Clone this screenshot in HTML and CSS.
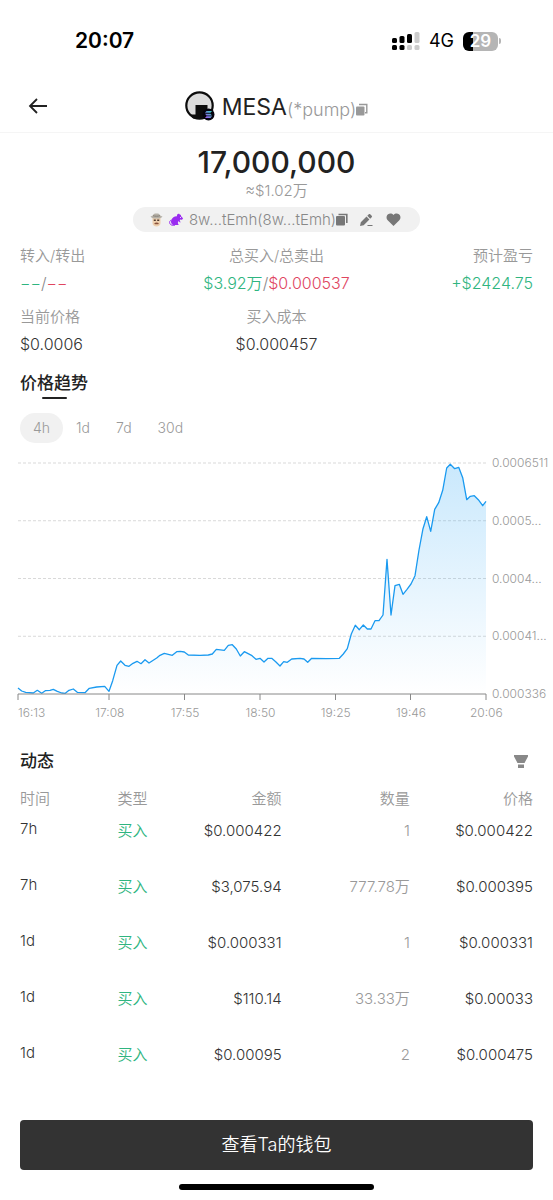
FILE: index.html
```html
<!DOCTYPE html>
<html lang="zh-CN">
<head>
<meta charset="utf-8">
<meta name="viewport" content="width=device-width, initial-scale=1">
<title>MESA</title>
<link rel="stylesheet" href="styles.css">
</head>
<body>
<div class="page">
  <div class="status">
    <span class="status-time">20:07</span>
    <div class="status-right">
      <svg class="signal" viewBox="0 0 28 20" aria-hidden="true">
        <g fill="#000"><rect x="0" y="7" width="5" height="5" rx="1.5"/><rect x="7.500" y="5" width="5" height="7" rx="1.500"/><rect x="15" y="3" width="5" height="9" rx="1.500"/><rect x="0" y="14" width="5" height="5" rx="1.500"/><rect x="7.500" y="14" width="5" height="5" rx="1.500"/></g>
        <g fill="#ccc"><rect x="22.500" y="1" width="5" height="11" rx="1.500"/><rect x="15" y="14" width="5" height="5" rx="1.500"/><rect x="22.500" y="14" width="5" height="5" rx="1.500"/></g>
      </svg>
      <span class="network">4G</span>
      <span class="battery"><span class="battery-level">29</span><span class="battery-tip"></span></span>
    </div>
  </div>

  <header class="nav">
    <button class="icon-btn back" type="button" aria-label="返回">
      <svg width="20" height="18" viewBox="0 0 20 18" fill="none" stroke="#222" stroke-width="1.800"><path d="M19 9H2M9 2 2 9l7 7"/></svg>
    </button>
    <h1 class="token">
      <svg class="avatar" width="30" height="30" viewBox="0 0 30 30" aria-hidden="true">
        <defs><linearGradient id="sol" x1="0" y1="1" x2="1" y2="0"><stop offset="0" stop-color="#a64cf5"/><stop offset="1" stop-color="#2fd6c0"/></linearGradient></defs>
        <circle cx="14.500" cy="14.500" r="13.200" fill="#dcdcdc" stroke="#0c0c0c" stroke-width="2.200"/>
        <path d="M10.500 14h12v13.500H8l-3-4h5.500z" fill="#0c0c0c"/>
        <circle cx="23.500" cy="23.500" r="6" fill="#05030d"/>
        <path d="M21.500 20h5.500l-1.500 1.700H20zM20 22.700h5.500l1.500 1.700h-5.500zM21.500 25.300h5.500L25.500 27H20z" fill="url(#sol)"/>
      </svg>
      <span class="token-name">MESA</span><span class="token-sub">(*pump)</span>
      <button class="icon-btn" type="button" aria-label="复制合约">
        <svg width="12" height="13" viewBox="0 0 12 13"><rect x="0" y="3.500" width="8.500" height="9" rx="1" fill="#999"/><path d="M3 1.500h7.800v8.200H9" fill="none" stroke="#999" stroke-width="1.400"/></svg>
      </button>
    </h1>
  </header>

  <main>
    <section class="balance">
      <p class="amount">17,000,000</p>
      <p class="approx">≈$1.02万</p>
      <div class="wallet">
        <svg class="farmer" width="13" height="14" viewBox="0 0 13 14" aria-hidden="true">
          <path d="M2.500 5h8v5c0 2-1.800 3.500-4 3.500s-4-1.500-4-3.500z" fill="#edcfae"/>
          <path d="M.5 3.500C1.500 3 3 2.800 3.200 2c.4-1.300 1.400-1.600 3.300-1.600s2.900.3 3.300 1.600c.2.800 1.700 1 2.700 1.500-1 1.600-3.300 2.100-6 2.100s-5-.5-6-2.100z" fill="#b5b1a8"/>
          <path d="M3 2.700c2 .7 5 .7 7 0" stroke="#857e74" fill="none"/>
          <path d="M3.800 6.500h2v1.600h-2zM7.200 6.500h2v1.600h-2z" fill="#4e3a30"/>
          <path d="M4.300 10.300c1.300-1 3.200-1 4.500 0l-.5 1H4.800z" fill="#89513b"/>
        </svg>
        <svg class="rat" width="14" height="13" viewBox="0 0 14 13" aria-hidden="true">
          <path d="M8 3.200c-.3-1.300.5-2.500 1.600-2.500.8 0 1.200.5 1.300 1.100.9-.2 1.300.4 1 1.200L14 5.200c-.3 1.300-1.500 1.600-2.800 1.400l-.5 1.500 1.200 1.200h-1.300L9.400 8l-.6 2 .9 2H4.200C2 11 1.600 9 2.300 7.300 3.300 4.500 5.500 3 8 3.200z" fill="#9a2cf0"/>
          <path d="M2.500 7C0 7.500-.2 11.500 3 12.200h3" fill="none" stroke="#9a2cf0"/>
          <circle cx="11.500" cy="4.500" r=".5" fill="#fff"/>
        </svg>
        <span class="wallet-name">8w...tEmh(8w...tEmh)</span>
        <button class="icon-btn" type="button" aria-label="复制地址">
          <svg width="12" height="13" viewBox="0 0 12 13"><rect x="0" y="3" width="9" height="9.500" rx="1" fill="#777"/><path d="M2.500 1.500h8.300v8.500" fill="none" stroke="#777" stroke-width="1.600"/></svg>
        </button>
        <button class="icon-btn edit" type="button" aria-label="编辑">
          <svg width="14" height="14" viewBox="0 0 14 14" fill="#777"><path d="M1 13l.8-3.700L7.500 3.600l2.900 2.900-5.700 5.700zM8.300 2.800 9.800 1.300c.5-.5 1-.5 1.400 0l1.500 1.500c.5.500.5.900 0 1.400l-1.500 1.500zM8.500 12h5v1h-5z"/></svg>
        </button>
        <button class="icon-btn heart" type="button" aria-label="收藏">
          <svg width="15" height="13" viewBox="0 0 16 14"><path d="M8 14 2 8.200C.5 6.700.3 5 .7 3.500 1.500.5 5.600-.5 8 2.200c2.400-2.700 6.500-1.700 7.300 1.300.4 1.500.2 3.200-1.300 4.700z" fill="#777"/></svg>
        </button>
      </div>
    </section>

    <dl class="stats">
      <div><dt>转入/转出</dt><dd><span class="up">−−</span><span class="slash">/</span><span class="down">−−</span></dd></div>
      <div><dt>总买入/总卖出</dt><dd><span class="up">$3.92万</span><span class="slash">/</span><span class="down">$0.000537</span></dd></div>
      <div><dt>预计盈亏</dt><dd class="up">+$2424.75</dd></div>
      <div><dt>当前价格</dt><dd>$0.0006</dd></div>
      <div><dt>买入成本</dt><dd>$0.000457</dd></div>
    </dl>

    <section class="trend">
      <h2 class="underlined">价格趋势</h2>
      <div class="tabs">
        <button class="tab active" type="button" aria-pressed="true">4h</button>
        <button class="tab" type="button" aria-pressed="false">1d</button>
        <button class="tab" type="button" aria-pressed="false">7d</button>
        <button class="tab" type="button" aria-pressed="false">30d</button>
      </div>
      <div class="chart">
        <svg class="plot" viewBox="0 0 468 231" preserveAspectRatio="none" role="img" aria-label="价格趋势">
          <defs><linearGradient id="fill" x1="0" y1="0" x2="0" y2="1"><stop offset="0" stop-color="#2aa5f5" stop-opacity=".25"/><stop offset="1" stop-color="#2aa5f5" stop-opacity="0"/></linearGradient></defs>
          <path class="gridline" d="M0 0H468M0 57.750H468M0 115.500H468M0 173.250H468"/>
          <path fill="url(#fill)" d="M0 231 0 225 3.700 228 7.700 229.300 15.300 230 19.300 227.300 23.700 230.300 27.300 227.700 32 227.300 35.300 226.300 39.300 228.300 43.700 230 47.300 230.300 51 227.300 55.300 226 59.300 229.300 67 229.700 71.300 225.300 78.700 224 86.700 223.300 91 228.300 94.700 217.700 99 202.300 102.700 198 107 202.300 111 203.300 115 200.300 119 198.300 123 200.700 127 196.700 131 200 138.700 195 142 192.300 146.300 190.300 154.300 192.300 158.700 188.700 162.300 188.300 166.300 189 170.300 192 182 192.300 190.300 192 194.300 191 198.300 186.300 206.300 187.300 210.300 182.300 214.300 181.700 218.300 186 222.300 193 226.300 188.700 234 192.700 238 196.300 242 195.300 246 199 250 195.300 253.700 195.300 257.700 198.700 262 203 265.700 198.700 269.300 199.300 273.700 196 282 195.300 286 196 289.700 199.300 293.700 195.300 308.700 195.700 321.300 195.300 325.300 191 329.300 185.700 333.300 171 337.300 162.300 341.300 166.700 345.300 162 349.300 166 353 166 357 157.700 361 157.700 365 152 369 96.300 373 152 377 122.700 381.300 121.300 385 131.300 389 126.300 393 121 397 112.700 401 87 405 65.700 408.700 53.700 412.700 68.300 416.700 46.300 420.700 39.700 424.700 27.300 428.700 5 432.300 1.300 436.700 5.700 440.700 4.300 444.700 14.700 448.700 36.700 452.300 33.300 456.300 32.700 460.300 36.700 464.700 42.700 468 38.300 468 231z"/>
          <polyline class="line" points="0 225 3.700 228 7.700 229.300 15.300 230 19.300 227.300 23.700 230.300 27.300 227.700 32 227.300 35.300 226.300 39.300 228.300 43.700 230 47.300 230.300 51 227.300 55.300 226 59.300 229.300 67 229.700 71.300 225.300 78.700 224 86.700 223.300 91 228.300 94.700 217.700 99 202.300 102.700 198 107 202.300 111 203.300 115 200.300 119 198.300 123 200.700 127 196.700 131 200 138.700 195 142 192.300 146.300 190.300 154.300 192.300 158.700 188.700 162.300 188.300 166.300 189 170.300 192 182 192.300 190.300 192 194.300 191 198.300 186.300 206.300 187.300 210.300 182.300 214.300 181.700 218.300 186 222.300 193 226.300 188.700 234 192.700 238 196.300 242 195.300 246 199 250 195.300 253.700 195.300 257.700 198.700 262 203 265.700 198.700 269.300 199.300 273.700 196 282 195.300 286 196 289.700 199.300 293.700 195.300 308.700 195.700 321.300 195.300 325.300 191 329.300 185.700 333.300 171 337.300 162.300 341.300 166.700 345.300 162 349.300 166 353 166 357 157.700 361 157.700 365 152 369 96.300 373 152 377 122.700 381.300 121.300 385 131.300 389 126.300 393 121 397 112.700 401 87 405 65.700 408.700 53.700 412.700 68.300 416.700 46.300 420.700 39.700 424.700 27.300 428.700 5 432.300 1.300 436.700 5.700 440.700 4.300 444.700 14.700 448.700 36.700 452.300 33.300 456.300 32.700 460.300 36.700 464.700 42.700 468 38.300"/>
          <path class="axis" d="M0 231H468M0 231v6M91 231v6M166.500 231v6M242 231v6M317.500 231v6M392.500 231v6M468 231v6"/>
        </svg>
        <div class="y-labels"><span>0.0006511</span><span>0.0005...</span><span>0.0004...</span><span>0.00041...</span><span>0.000336</span></div>
      </div>
      <div class="x-labels"><span>16:13</span><span>17:08</span><span>17:55</span><span>18:50</span><span>19:25</span><span>19:46</span><span>20:06</span></div>
    </section>

    <section class="activity">
      <div class="activity-head">
        <h2>动态</h2>
        <button class="icon-btn filter" type="button" aria-label="筛选">
          <svg width="14" height="13" viewBox="0 0 14 13" fill="#888"><path d="M0 0h14v1.500L10.500 8h-7L0 1.500zM4 9.500h6V13H4z"/></svg>
        </button>
      </div>
      <table>
        <thead><tr><th>时间</th><th>类型</th><th>金额</th><th>数量</th><th>价格</th></tr></thead>
        <tbody>
          <tr><td>7h</td><td>买入</td><td>$0.000422</td><td>1</td><td>$0.000422</td></tr>
          <tr><td>7h</td><td>买入</td><td>$3,075.94</td><td>777.78万</td><td>$0.000395</td></tr>
          <tr><td>1d</td><td>买入</td><td>$0.000331</td><td>1</td><td>$0.000331</td></tr>
          <tr><td>1d</td><td>买入</td><td>$110.14</td><td>33.33万</td><td>$0.00033</td></tr>
          <tr><td>1d</td><td>买入</td><td>$0.00095</td><td>2</td><td>$0.000475</td></tr>
        </tbody>
      </table>
    </section>
  </main>

  <footer class="footer">
    <button class="wallet-btn" type="button">查看Ta的钱包</button>
    <div class="home-bar"></div>
  </footer>
</div>
</body>
</html>
```

FILE: styles.css
```css
* { box-sizing: border-box; }

body {
  margin: 0;
  background: #fff;
  color: #333;
  font: 350 15px/20px Inter, "Noto Sans CJK SC", sans-serif;
}

h1, h2, p, dl, dd { margin: 0; }

button { font: inherit; cursor: pointer; }

svg { display: block; }

.page {
  display: flex;
  flex-direction: column;
  min-height: 100vh;
}

main { flex: 1; }

.icon-btn {
  display: flex;
  padding: 0;
  border: 0;
  background: none;
}

.up { color: #2fb580; }
.down { color: #e0455f; }
.slash { color: #888; }

/* Status bar */
.status {
  display: flex;
  align-items: center;
  justify-content: space-between;
  height: 82px;
  padding: 0 52px 0 75px;
  color: #000;
}

.status-time { font-size: 21px; font-weight: 600; }

.status-right { display: flex; align-items: center; gap: 9px; }

.signal { width: 28px; height: 20px; }

.network { font-size: 18px; font-weight: 400; }

.battery { display: flex; align-items: center; gap: 1px; }

.battery-level {
  width: 35px;
  border-radius: 6px;
  background: linear-gradient(90deg, #000 29%, #b5b5b5 29%);
  color: #fff;
  font-size: 17px;
  font-weight: 600;
  line-height: 19px;
  text-align: center;
}

.battery-tip {
  width: 2px;
  height: 6px;
  border-radius: 0 2px 2px 0;
  background: #b5b5b5;
}

/* Title bar */
.nav {
  display: grid;
  grid-template-columns: 48px 1fr 48px;
  align-items: center;
  height: 51px;
  border-bottom: 1px solid #f5f5f5;
}

.back { padding: 0 0 3px 28px; }

.token {
  display: flex;
  align-items: center;
  justify-content: center;
  color: #222;
  font-weight: 400;
  white-space: nowrap;
}

.avatar { margin-bottom: 2px; }

.token-name { margin-left: 7px; font-size: 23px; line-height: 28px; }

.token-sub {
  padding-top: 5px;
  color: #999;
  font-size: 18px;
  font-weight: 350;
}

.token .icon-btn { padding-top: 5px; }

/* Balance */
.balance {
  display: flex;
  flex-direction: column;
  align-items: center;
  padding-top: 11px;
}

.amount { color: #222; font-size: 30px; font-weight: 500; line-height: 36px; }

.approx { padding-top: 1px; color: #999; }

.wallet {
  display: flex;
  align-items: center;
  height: 25px;
  margin-top: 6px;
  padding: 0 19px 0 17px;
  border-radius: 13px;
  background: #f1f1f1;
  color: #888;
}

.rat { margin: 0 6px; }
.edit { margin-left: 11px; }
.heart { margin-left: 13px; }

/* Stats */
.stats {
  display: grid;
  grid-template-columns: repeat(3, 1fr);
  row-gap: 14px;
  padding: 14px 20px 0;
  white-space: nowrap;
}

.stats > div { display: flex; flex-direction: column; gap: 7px; }
.stats > :nth-child(3n + 2) { align-items: center; }
.stats > :nth-child(3n) { align-items: flex-end; }

dt { color: #999; }
dd { font-size: 16px; }

/* Price trend */
h2 { color: #222; font-size: 17px; font-weight: 500; line-height: 24px; }

.underlined {
  display: flex;
  flex-direction: column;
  align-items: center;
  width: max-content;
  margin: 17px 20px 0;
}

.underlined::after {
  content: "";
  width: 25px;
  height: 2px;
  margin-top: 2px;
  border-radius: 1px;
  background: #222;
}

.tabs { display: flex; padding: 14px 20px 0; }

.tab {
  padding: 5px 13px;
  border: 0;
  border-radius: 15px;
  background: none;
  color: #999;
  font-size: 14px;
}

.tab.active { background: #f1f1f1; }

.chart {
  display: grid;
  grid-template-columns: 1fr 61px;
  column-gap: 6px;
  padding: 12px 0 0 18px;
}

.plot { width: 100%; height: 231px; margin-top: 8px; overflow: visible; }

.gridline, .axis, .line { fill: none; vector-effect: non-scaling-stroke; }
.gridline { stroke: #d9d9d9; stroke-dasharray: 3 2; }
.axis { stroke: #888; }
.line { stroke: #1a9af0; stroke-width: 1.3; stroke-linejoin: round; }

.y-labels {
  display: flex;
  flex-direction: column;
  justify-content: space-between;
  height: 247px;
  color: #999;
  font-size: 12px;
  line-height: 16px;
}

.x-labels {
  display: grid;
  grid-template-columns: 54fr repeat(6, 75fr);
  padding: 3px 29px 0 18px;
  color: #999;
  font-size: 12px;
  line-height: 16px;
  text-align: center;
}

.x-labels > :first-child { text-align: left; }

/* Activity */
.activity { padding: 28px 20px 0; }

.activity-head {
  display: flex;
  align-items: center;
  justify-content: space-between;
}

.filter { padding-right: 5px; }

table {
  width: 100%;
  margin-top: 16px;
  border-collapse: collapse;
  table-layout: fixed;
}

th, td { padding: 0; text-align: right; vertical-align: top; }
th { height: 30px; color: #999; font-weight: 350; }
td { height: 56px; padding-top: 2px; }
td:first-child { padding-top: 0; }
th:nth-child(-n + 2), td:nth-child(-n + 2) { text-align: left; }
th:nth-child(1) { width: 19%; }
th:nth-child(2) { width: 11%; }
th:nth-child(3) { width: 21%; }
th:nth-child(4) { width: 25%; }
td:nth-child(2) { color: #2fb580; }
td:nth-child(4) { color: #999; }

/* Footer */
.footer {
  display: flex;
  flex-direction: column;
  align-items: center;
  gap: 14px;
  padding: 0 20px 10px;
}

.wallet-btn {
  width: 100%;
  padding: 13px;
  border: 0;
  border-radius: 4px;
  background: #333;
  color: #fff;
  font-size: 18px;
  line-height: 24px;
}

.home-bar {
  width: 38%;
  height: 6px;
  border-radius: 3px;
  background: #000;
}
```
